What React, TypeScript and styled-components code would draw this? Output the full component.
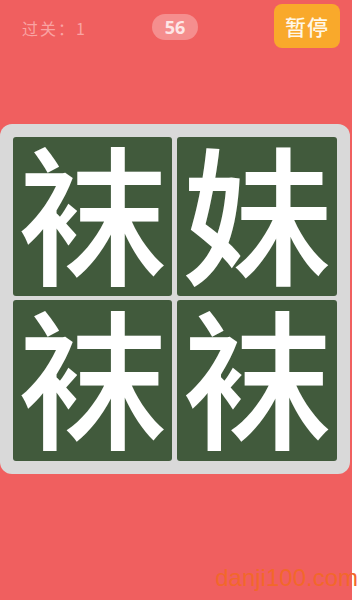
import React from 'react'
import styled, { createGlobalStyle } from 'styled-components'

const GlobalStyle = createGlobalStyle`
  html, body {
    margin: 0;
    padding: 0;
    background: #ffffff;
  }
  body {
    font-family: 'Noto Sans CJK SC', 'Noto Sans', sans-serif;
  }
`

const colors = {
  red: '#f05f5f',
  board: '#d9d9d9',
  tile: '#415a3c',
  orange: '#f9a92b',
}

const Screen = styled.div`
  position: relative;
  width: 352px;
  height: 600px;
  background: ${colors.red};
  overflow: visible;
`

const TopBar = styled.div`
  display: flex;
  align-items: center;
  height: 56px;
  padding: 0 12px 0 22px;
  box-sizing: border-box;
`

const Level = styled.div`
  width: 130px;
  color: #f9a3a3;
  font-size: 16px;
  letter-spacing: 2px;
`

const Timer = styled.div`
  width: 46px;
  height: 26px;
  margin-top: -3px;
  border-radius: 13px;
  background: #f58e8e;
  color: #fde6e6;
  font-family: 'Open Sans', sans-serif;
  font-weight: 700;
  font-size: 18px;
  line-height: 26px;
  text-align: center;
`

const PauseButton = styled.button`
  width: 66px;
  height: 44px;
  margin: -5px 0 0 auto;
  border: none;
  border-radius: 8px;
  background: ${colors.orange};
  color: #fff7e8;
  font-family: 'Noto Sans CJK SC', sans-serif;
  font-weight: 500;
  font-size: 21px;
  letter-spacing: 1px;
  padding: 0;
`

const Board = styled.div`
  margin: 68px 0 0 0;
  width: 350px;
  padding: 13px;
  box-sizing: border-box;
  border-radius: 12px;
  background: ${colors.board};
  display: grid;
  grid-template-columns: 159px 160px;
  grid-template-rows: 159px 161px;
  gap: 4px 5px;
`

const Tile = styled.div`
  background: ${colors.tile};
  border-radius: 3px;
  display: flex;
  align-items: center;
  justify-content: center;
  padding-bottom: 16px;
  box-sizing: border-box;
  color: #ffffff;
  font-family: 'Noto Sans CJK SC', sans-serif;
  font-weight: 500;
  font-size: 150px;
  line-height: 130px;
`

const Watermark = styled.div`
  position: absolute;
  right: -6px;
  bottom: 8px;
  color: #f2682a;
  font-family: 'Liberation Sans', Arial, sans-serif;
  font-size: 24px;
`

const chars = ['袜', '妹', '袜', '袜']

export default function App() {
  return (
    <>
      <GlobalStyle />
      <Screen>
        <TopBar>
          <Level>过关：1</Level>
          <Timer>56</Timer>
          <PauseButton>暂停</PauseButton>
        </TopBar>
        <Board>
          {chars.map((c, i) => (
            <Tile key={i}>{c}</Tile>
          ))}
        </Board>
        <Watermark>danji100.com</Watermark>
      </Screen>
    </>
  )
}
